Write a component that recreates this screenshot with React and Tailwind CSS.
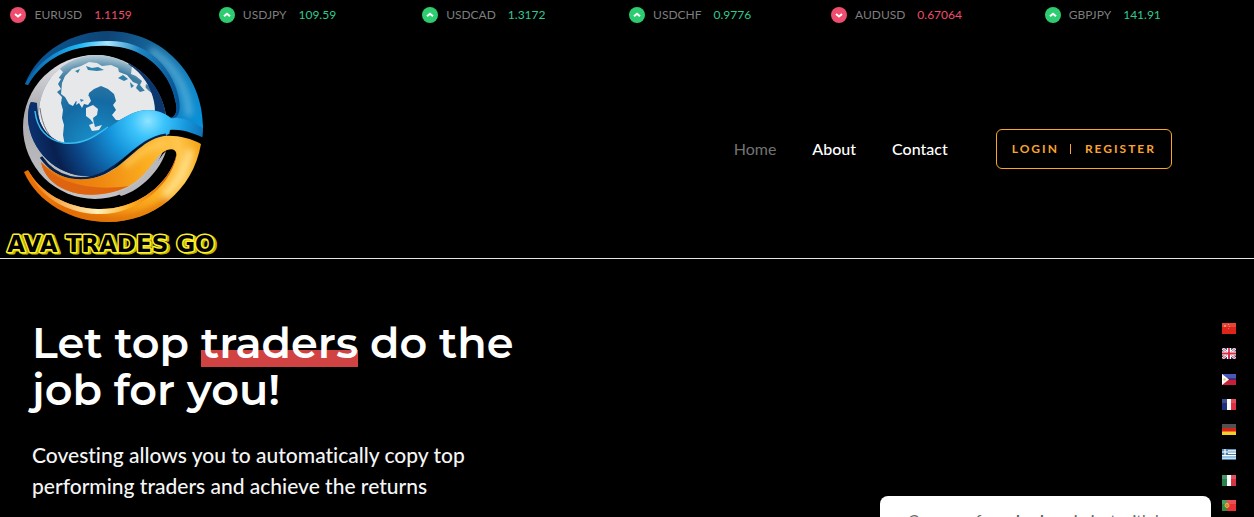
const quotes = [
  { pair: "EURUSD", price: "1.1159", up: false },
  { pair: "USDJPY", price: "109.59", up: true },
  { pair: "USDCAD", price: "1.3172", up: true },
  { pair: "USDCHF", price: "0.9776", up: true },
  { pair: "AUDUSD", price: "0.67064", up: false },
  { pair: "GBPJPY", price: "141.91", up: true },
];

function Ticker() {
  return (
    <div className="overflow-hidden">
      <ul className="-ml-8 mr-12 grid h-[30px] grid-cols-6">
        {quotes.map((q) => (
          <li key={q.pair} className="flex items-center justify-center text-[12px]">
            <svg viewBox="0 0 16 16" className="mr-2 size-4" aria-hidden="true">
              <circle cx="8" cy="8" r="8" fill={q.up ? "#2ecc71" : "#ee4d6d"} />
              <path
                d={q.up ? "M5 9.3 8 6.7l3 2.6" : "M5 6.9l3 2.6 3-2.6"}
                fill="none"
                stroke="#fff"
                strokeWidth="2"
              />
            </svg>
            <span className="text-[#7d7d7d]">{q.pair}</span>
            <span className={q.up ? "ml-3 text-[#32c98f]" : "ml-3 text-[#ee4d6d]"}>{q.price}</span>
          </li>
        ))}
      </ul>
    </div>
  );
}

function Logo() {
  return (
    <svg viewBox="0 30 220 228" className="block h-[228px] w-[220px]" role="img" aria-label="Ava Trades Go">
      <defs>
        <linearGradient id="silver" x1="0" y1="0" x2="0" y2="1">
          <stop offset="0" stopColor="#e4e4e8" />
          <stop offset="0.4" stopColor="#a9a9ae" />
          <stop offset="1" stopColor="#c4c4c8" />
        </linearGradient>
        <radialGradient id="ocean" cx="0.5" cy="0.8" r="0.8">
          <stop offset="0" stopColor="#1a97d0" />
          <stop offset="0.5" stopColor="#146aa3" />
          <stop offset="0.85" stopColor="#3f7ea3" />
          <stop offset="1" stopColor="#b9ced8" />
        </radialGradient>
        <radialGradient id="wave" gradientUnits="userSpaceOnUse" cx="148" cy="121" r="115">
          <stop offset="0" stopColor="#8fe4ff" />
          <stop offset="0.14" stopColor="#3cc4fb" />
          <stop offset="0.34" stopColor="#1595dc" />
          <stop offset="0.66" stopColor="#0b4788" />
          <stop offset="0.85" stopColor="#08204f" />
          <stop offset="1" stopColor="#0b2f6c" />
        </radialGradient>
        <linearGradient id="crescent" gradientUnits="userSpaceOnUse" x1="30" y1="60" x2="205" y2="120">
          <stop offset="0" stopColor="#0b5794" />
          <stop offset="0.35" stopColor="#0e4475" />
          <stop offset="0.7" stopColor="#1872aa" />
          <stop offset="1" stopColor="#0793dc" />
        </linearGradient>
        <linearGradient id="shine" gradientUnits="userSpaceOnUse" x1="30" y1="80" x2="178" y2="100">
          <stop offset="0" stopColor="#0869b0" />
          <stop offset="0.3" stopColor="#1fb7f5" />
          <stop offset="0.48" stopColor="#a8e5ff" />
          <stop offset="0.7" stopColor="#1d86c2" />
          <stop offset="1" stopColor="#075294" />
        </linearGradient>
        <linearGradient id="gold" gradientUnits="userSpaceOnUse" x1="35" y1="180" x2="205" y2="145">
          <stop offset="0" stopColor="#e76f08" />
          <stop offset="0.35" stopColor="#ee860f" />
          <stop offset="0.65" stopColor="#fbae20" />
          <stop offset="0.85" stopColor="#ffc64d" />
          <stop offset="1" stopColor="#f29a06" />
        </linearGradient>
        <linearGradient id="goldShine" gradientUnits="userSpaceOnUse" x1="30" y1="180" x2="180" y2="165">
          <stop offset="0" stopColor="#f07c0a" />
          <stop offset="0.42" stopColor="#fff0b8" />
          <stop offset="0.65" stopColor="#ffab1c" />
          <stop offset="1" stopColor="#cf5606" />
        </linearGradient>
        <filter id="soft" x="-30%" y="-30%" width="160%" height="160%">
          <feGaussianBlur stdDeviation="3" />
        </filter>
        <clipPath id="globe">
          <ellipse cx="97" cy="113" rx="58" ry="58" />
        </clipPath>
        <clipPath id="goldBody">
          <path d="M201 144C190 138 177 135 164 136C141 140 128 163 106 174C82 184 59 180 41 162C43 174 53 185 66 190C88 199 113 194 129 186C149 175 154 156 167 150C176 147 178 153 175 160C164 190 132 210 98 209C66 208 40 192 28 170L24 172C37 202 71 222 108 222C153 222 193 191 201 144Z" />
        </clipPath>
      </defs>

      <circle cx="95" cy="127" r="72" fill="url(#silver)" />
      <path d="M128 63C151 75 163 94 166 116L150 124Z" fill="#0b376e" />
      <ellipse cx="97" cy="113" rx="58" ry="58" fill="url(#ocean)" />
      <g clipPath="url(#globe)">
        <g fill="#e6e8ea">
          <path d="M38 99l2-14 6-10 9-3 2 5 4 2-3 5 3 5-4 3 5 5-1 6 2 7-1 8 2 7-1 10 2 11-12-3-14-17Z" />
          <path d="M50 77l5-11 7-2-2 5 3 3-5 7-5 2Z" />
          <path d="M62 83l3-7 7-7 9-3 8-4 8 1 5 3 9-1 7 3 1 4 8 3 6 7 5 2-2 4 4 4 7-2 5 3 3 9 1 11-4 2-10-1-9 3-8 4-9-1-4-5 4-5-3-5 3-4-2-7-6-5-7-3-7 3-5 4-1 5-3 2-4 4-5-3-3 5-4-2-4-7-4-3Z" />
          <path d="M76 96l4-2 4 3 5-1 2 5-3 4-4-1-2 4-3-5-3 2 1-5Z" />
          <path d="M86 108l7-3 5 4-1 6-4 3 1 6-4-5-4-3Z" />
          <path d="M89 125l5-2 1 4 7-2-3 5-7 1Z" />
          <path d="M132 66l7 3 7 8 5 10-5-3-1 7-5-6 2-4-6-5-5-2Z" />
          <path d="M145 87l5 5 2 12-3-1-4-9Z" />
        </g>
        <g fill="#2e82ad">
          <path d="M86 66l6 2 6-1 6 3-7 1-9-1ZM118 78l5-3 5 4-4 2ZM130 82l4 4-3 2ZM75 71l5-2-2 4ZM80 99l4 1-3 2Z" />
        </g>
      </g>
      <path d="M40 108c2 18 9 30 20 37" fill="none" stroke="#77797e" strokeWidth="1" />

      <path
        d="M25 84C38 51 72 31 109 31C163 32 203 75 203 127L202 139C190 132 176 131 166 135C140 139 124 166 101 174C67 184 30 156 28 119C28 111 29 105 31 102L37 103C37 122 45 138 64 143C92 147 105 126 131 114C146 107 160 110 171 118C180 114 176 103 173 92C165 67 141 47 110 46C73 44 44 57 28 85Z"
        fill="url(#crescent)"
      />
      <path d="M150 50C175 65 188 90 189 116" fill="none" stroke="#6cc0e2" strokeOpacity="0.6" strokeWidth="8" filter="url(#soft)" />
      <path
        d="M31 102L37 103C37 122 45 138 64 143C92 147 105 126 131 114C146 107 160 110 171 118C183 117 191 121 203 128L202 139C190 132 176 131 166 135C140 139 124 166 101 174C67 184 30 156 28 119C28 111 29 105 31 102Z"
        fill="url(#wave)"
      />
      <path
        d="M25 84L28 85C44 57 73 44 110 46C141 47 165 67 173 92C176 103 180 114 171 118C181 120 182 105 176 88C167 62 143 41 110 41C70 40 43 54 25 84Z"
        fill="url(#shine)"
      />
      <path d="M35 111C37 130 48 140 64 143C84 145 95 136 108 127" fill="none" stroke="#35bdf0" strokeWidth="1.500" />
      <path d="M41 157C57 180 82 183 104 173C128 161 140 139 166 135" fill="none" stroke="#06214a" strokeWidth="3" />
      <path d="M170 130C184 129 194 134 204 138L202 143C192 139 180 136 169 136Z" fill="#000" />

      <path
        d="M201 144C190 138 177 135 164 136C141 140 128 163 106 174C82 184 59 180 41 162C43 174 53 185 66 190C88 199 113 194 129 186C149 175 154 156 167 150C176 147 178 153 175 160C164 190 132 210 98 209C66 208 40 192 28 170L24 172C37 202 71 222 108 222C153 222 193 191 201 144Z"
        fill="url(#gold)"
      />
      <g clipPath="url(#goldBody)">
        <g filter="url(#soft)" fill="none">
          <path d="M55 205C90 224 130 228 170 200" stroke="#d96504" strokeOpacity="0.7" strokeWidth="8" />
          <path d="M190 150C186 170 177 184 164 195" stroke="#ffe08a" strokeWidth="7" />
          <path d="M125 166C137 155 147 147 165 143" stroke="#ffd36a" strokeOpacity="0.7" strokeWidth="6" />
        </g>
      </g>
      <path
        d="M28 170C40 192 66 208 98 209C132 210 164 190 175 160L177 151C175 183 137 216 97 214C67 213 39 197 28 170Z"
        fill="url(#goldShine)"
      />
      <path d="M41 162C43 174 53 185 66 190C88 199 113 194 129 186C107 189 87 188 70 182C57 178 49 172 41 162Z" fill="#df6410" />
      <path d="M117 192C137 187 151 172 163 154L166 151C161 169 142 190 121 196Z" fill="#b9b9bd" />
      <path d="M112 170C124 158 132 150 145 143C132 151 124 162 112 170Z" fill="#000" />

      <g
        fontFamily="DejaVu Sans, sans-serif"
        fontWeight="700"
        fontSize="23"
        textAnchor="middle"
        strokeLinejoin="round"
      >
        <text x="113" y="253" fill="#bdb400" stroke="#bdb400" strokeWidth="3" aria-hidden="true">AVA TRADES GO</text>
        <text x="111" y="252" fill="#000" stroke="#fff02a" strokeWidth="3" paintOrder="stroke">AVA TRADES GO</text>
      </g>
    </svg>
  );
}

function Header() {
  return (
    <header className="flex items-center justify-between border-b border-[#e5e5e5]">
      <a href="#home">
        <Logo />
      </a>
      <div className="mr-[82px] flex items-center pt-[10px]">
        <nav className="flex gap-9 text-base font-medium">
          <a href="#home" className="font-normal text-[#737373]">Home</a>
          <a href="#about">About</a>
          <a href="#contact">Contact</a>
        </nav>
        <a
          href="#login"
          className="ml-12 flex h-10 items-center rounded-md border border-[#faa820] pr-[15px] pl-[15px] text-[12px] font-bold tracking-[2px] whitespace-pre text-[#faa430]"
        >
          LOGIN
          <span className="mr-[14px] ml-[11px] h-[10px] border-l" />
          REGISTER
        </a>
      </div>
    </header>
  );
}

function Hero() {
  return (
    <section className="flex items-start justify-between">
      <div className="ml-8 max-w-[490px] pt-[60px]">
        <h1 className="font-[Montserrat,Inter,sans-serif] text-[43px] leading-[47px] font-semibold">
          Let top{" "}
          <span className="bg-[linear-gradient(transparent_65%,#d14343_65%,#d14343_96%,transparent_96%)]">traders</span>{" "}
          do the job for you!
        </h1>
        <p className="mt-[26px] max-w-[450px] text-[21px] leading-[31px] font-medium text-[#f5f5f5] [font-variant-ligatures:none]">
          Covesting allows you to automatically copy top performing traders and achieve the returns
        </p>
      </div>
      <div className="mt-[237px] mr-[43px] w-[331px] rounded-lg bg-white px-7 pt-3 pb-6 text-base text-[#666]">
        <p>
          Compare forex <strong>brokers</strong> in just with b
        </p>
      </div>
    </section>
  );
}

const flags = [
  {
    name: "Chinese",
    art: (
      <>
        <path fill="#df2419" d="M0 0h14v11H0z" />
        <path fill="#ef7c48" d="M2 2h2v2H2zM6 1h1v1H6zM7 3h1v1H7zM6 5h1v1H6z" />
      </>
    ),
  },
  {
    name: "English",
    art: (
      <>
        <path fill="#20347b" d="M0 0h14v11H0z" />
        <path stroke="#fff" strokeWidth="2.500" d="m0 0 14 11M14 0 0 11" />
        <path stroke="#d72d42" strokeWidth="1" d="m0 0 14 11M14 0 0 11" />
        <path stroke="#fff" strokeWidth="4" d="M7 0v11M0 5.500h14" />
        <path stroke="#d72d42" strokeWidth="2" d="M7 0v11M0 5.500h14" />
      </>
    ),
  },
  {
    name: "Filipino",
    art: (
      <>
        <path fill="#293caa" d="M0 0h14v5.500H0z" />
        <path fill="#c52036" d="M0 5.500h14V11H0z" />
        <path fill="#fff" d="m0 0 7 5.500L0 11z" />
        <circle cx="2.500" cy="5.500" r="1.200" fill="#e9cb62" />
      </>
    ),
  },
  {
    name: "French",
    art: (
      <>
        <path fill="#20307e" d="M0 0h5v11H0z" />
        <path fill="#fff" d="M5 0h4v11H5z" />
        <path fill="#dd3040" d="M9 0h5v11H9z" />
      </>
    ),
  },
  {
    name: "German",
    art: (
      <>
        <path fill="#333" d="M0 0h14v4H0z" />
        <path fill="#d9221b" d="M0 4h14v4H0z" />
        <path fill="#f5cf29" d="M0 7.500h14V11H0z" />
      </>
    ),
  },
  {
    name: "Greek",
    art: (
      <>
        <path fill="#fff" d="M0 0h14v11H0z" />
        <path stroke="#3e80b4" strokeWidth="1.200" d="M0 .6h14M0 3h14M0 5.500h14M0 8h14M0 10.400h14" />
        <path fill="#3e80b4" d="M0 0h6v6H0z" />
        <path stroke="#fff" strokeWidth="1.200" d="M3 0v6M0 3h6" />
      </>
    ),
  },
  {
    name: "Italian",
    art: (
      <>
        <path fill="#27834e" d="M0 0h5v11H0z" />
        <path fill="#fff" d="M5 0h4v11H5z" />
        <path fill="#d63442" d="M9 0h5v11H9z" />
      </>
    ),
  },
  {
    name: "Portuguese",
    art: (
      <>
        <path fill="#328a43" d="M0 0h5v11H0z" />
        <path fill="#e63135" d="M5 0h9v11H5z" />
        <circle cx="5" cy="5.500" r="2" fill="#dc8042" stroke="#d4bc3d" />
      </>
    ),
  },
];

function Languages() {
  return (
    <ul className="absolute top-[323px] right-[18px] flex h-[188px] flex-col justify-between">
      {flags.map((flag) => (
        <li key={flag.name}>
          <a href="#home" aria-label={flag.name}>
            <svg viewBox="0 0 14 11" className="h-[11px] w-[14px]">
              {flag.art}
              <path fill="#fff" fillOpacity="0.15" d="M0 0h14v4H0z" />
            </svg>
          </a>
        </li>
      ))}
    </ul>
  );
}

export default function App() {
  return (
    <div className="relative h-screen overflow-hidden bg-black font-[Lato,sans-serif] text-white">
      <Ticker />
      <Header />
      <Hero />
      <Languages />
    </div>
  );
}
